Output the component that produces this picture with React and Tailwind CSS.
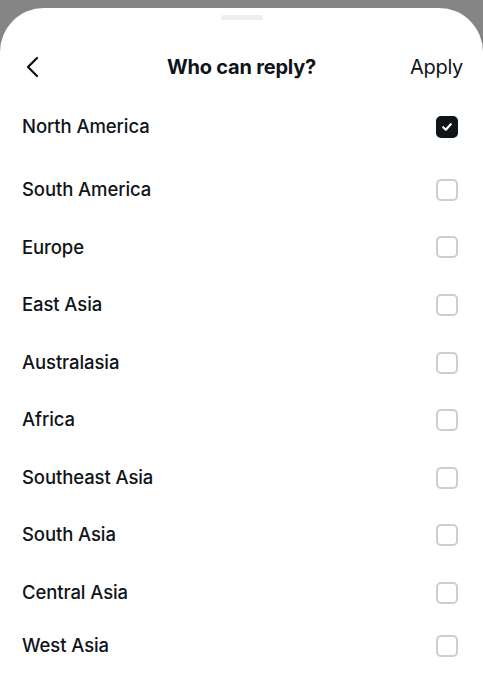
const regions = [
  "North America",
  "South America",
  "Europe",
  "East Asia",
  "Australasia",
  "Africa",
  "Southeast Asia",
  "South Asia",
  "Central Asia",
  "West Asia",
];

function Checkbox({ checked }) {
  if (checked) {
    return (
      <div className="w-[22px] h-[22px] rounded-[5px] bg-[#0f1419] flex items-center justify-center">
        <svg width="12" height="12" viewBox="0 0 12 12" fill="none">
          <path d="M2.2 6.3 L4.8 8.8 L9.8 3.2" stroke="white" strokeWidth="2.2" strokeLinecap="round" strokeLinejoin="round" />
        </svg>
      </div>
    );
  }
  return <div className="w-[22px] h-[22px] rounded-[5px] border-2 border-[#c8d0d6]" />;
}

export default function App() {
  return (
    <div className="w-[483px] h-[680px] bg-[#858585] pt-[8px] overflow-hidden" style={{ fontFamily: "Inter, 'Noto Sans', sans-serif" }}>
      <div className="h-full bg-white rounded-t-[44px] text-[#0f1419]">
        <div className="flex justify-center pt-[7px]">
          <div className="w-[42px] h-[5px] rounded-full bg-[#eceef0]" />
        </div>
        <div className="relative flex items-center justify-between h-[40px] mt-[27px] pl-[25px] pr-[18px]">
          <svg width="14" height="22" viewBox="0 0 14 22" fill="none">
            <path d="M12 2 L3 11 L12 20" stroke="#0f1419" strokeWidth="2.3" strokeLinecap="round" strokeLinejoin="round" />
          </svg>
          <h1 className="absolute left-0 right-0 text-center text-[20px] font-bold tracking-[-0.2px] pointer-events-none">
            Who can reply?
          </h1>
          <button className="text-[20px] font-normal tracking-[-0.3px] mr-[2px]">Apply</button>
        </div>
        <div className="mt-[11px]">
          {regions.map((r, i) => (
            <div
              key={r}
              className={
                "flex items-center justify-between pl-[22px] pr-[25px] " +
                (i === 0 ? "h-[58px]" : "h-[57.6px]") +
                (i === 1 ? " mt-[5px]" : "") +
                (i === 9 ? " -mt-[5px]" : "")
              }
            >
              <span className="text-[18.5px] font-medium tracking-[-0.1px]">{r}</span>
              <Checkbox checked={i === 0} />
            </div>
          ))}
        </div>
      </div>
    </div>
  );
}
